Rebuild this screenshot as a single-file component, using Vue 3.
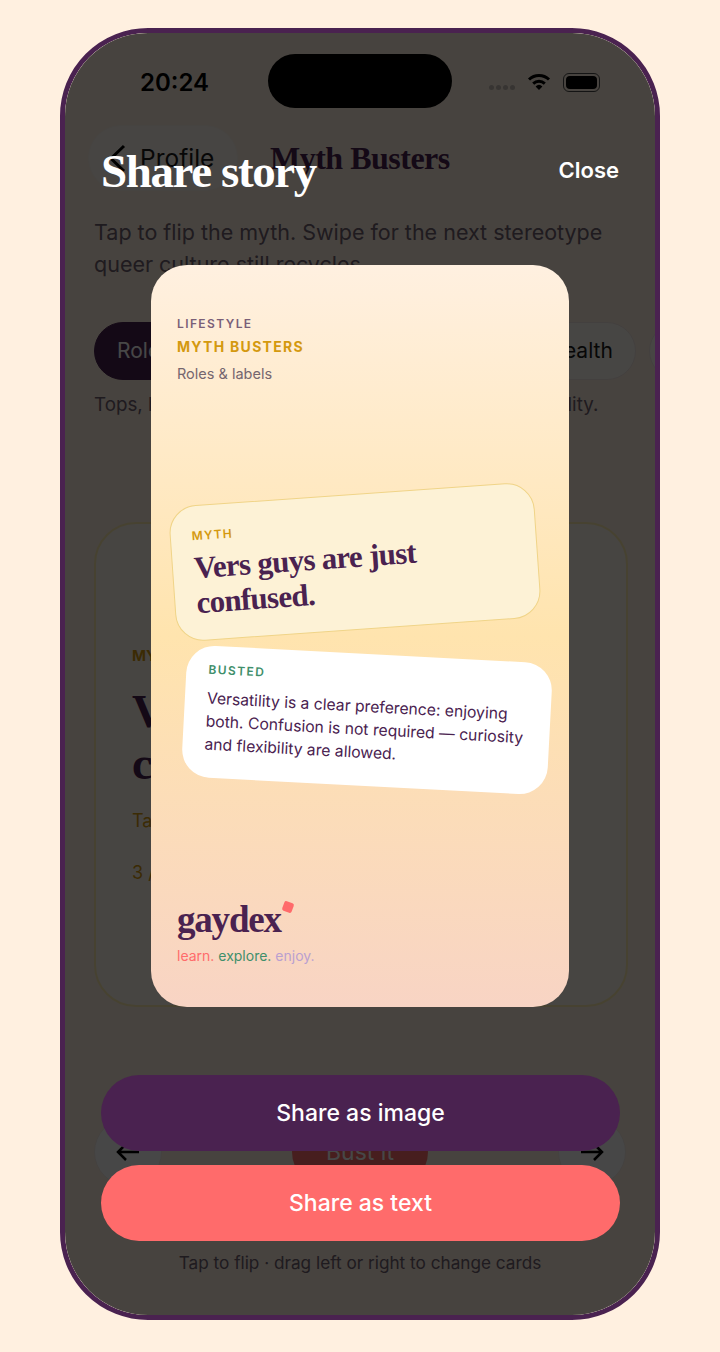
<template>
  <div class="phone">
    <div class="screen">
      <div class="status">
        <span class="time">20:24</span>
        <div class="island"></div>
        <div class="status-icons">
          <div class="signal"><i v-for="n in 4" :key="n"></i></div>
          <svg width="24" height="18" viewBox="0 0 24 18">
            <path d="M2 6.5a14.5 14.5 0 0 1 20 0" fill="none" stroke="#000" stroke-width="3" />
            <path d="M6.2 10.6a8.6 8.6 0 0 1 11.6 0" fill="none" stroke="#000" stroke-width="3" />
            <path d="M8.6 13.4a5 5 0 0 1 6.8 0L12 17z" fill="#000" />
          </svg>
          <div class="battery"><div class="battery-fill"></div></div>
        </div>
      </div>

      <div class="nav">
        <div class="back">
          <svg width="20" height="28" viewBox="0 0 20 28">
            <path d="M17 2 4 14.5 17 27" fill="none" stroke="#000" stroke-width="3" />
          </svg>
          <span>Profile</span>
        </div>
        <h1 class="page-title">Myth Busters</h1>
      </div>

      <p class="intro">Tap to flip the myth. Swipe for the next stereotype queer culture still recycles.</p>

      <div class="chips">
        <span v-for="chip in chips" :key="chip.label" class="chip" :class="{ active: chip.active }">{{ chip.label }}</span>
      </div>
      <p class="chip-note">Tops, bottoms and what people assume about versatility.</p>

      <div class="flip-card">
        <span class="flip-label">MYTH</span>
        <h2 class="flip-title">Vers guys are just confused.</h2>
        <span class="flip-hint">Tap to bust it</span>
        <span class="flip-count">3 / 12</span>
      </div>

      <div class="controls">
        <div class="round">
          <svg width="26" height="20" viewBox="0 0 26 20"><path d="M24 10H3M11 2l-8 8 8 8" fill="none" stroke="#000" stroke-width="2.5" /></svg>
        </div>
        <div class="bust">Bust it</div>
        <div class="round">
          <svg width="26" height="20" viewBox="0 0 26 20"><path d="M2 10h21M15 2l8 8-8 8" fill="none" stroke="#000" stroke-width="2.5" /></svg>
        </div>
      </div>
      <p class="caption">Tap to flip · drag left or right to change cards</p>

      <div class="overlay">
        <div class="overlay-head">
          <h2 class="share-title">Share story</h2>
          <span class="close">Close</span>
        </div>

        <div class="story">
          <div class="story-top">
            <div class="story-section">LIFESTYLE</div>
            <div class="story-name">MYTH BUSTERS</div>
            <div class="story-topic">Roles &amp; labels</div>
          </div>

          <div class="story-cards">
            <div class="myth">
              <div class="myth-label">MYTH</div>
              <div class="myth-text">Vers guys are just confused.</div>
            </div>
            <div class="busted">
              <div class="busted-label">BUSTED</div>
              <div class="busted-text">Versatility is a clear preference: enjoying both. Confusion is not required — curiosity and flexibility are allowed.</div>
            </div>
          </div>

          <div class="brand">
            <div class="logo">gaydex<i class="logo-dot"></i></div>
            <div class="tagline">
              <span class="learn">learn.</span> <span class="explore">explore.</span> <span class="enjoy">enjoy.</span>
            </div>
          </div>
        </div>

        <div class="actions">
          <button class="action image">Share as image</button>
          <button class="action text">Share as text</button>
        </div>
      </div>
    </div>
  </div>
</template>

<script setup>
const chips = [
  { label: "Roles & labels", active: true },
  { label: "Community" },
  { label: "Sex & health" },
  { label: "Dating" },
];
</script>

<style>
body {
  background: #fff0e0;
}
</style>

<style scoped>
.phone {
  box-sizing: border-box;
  width: 600px;
  height: 1292px;
  margin: 28px 60px 32px;
  border: 5px solid #4a2250;
  border-radius: 88px;
  overflow: hidden;
  font-family: "Inter", "Liberation Sans", sans-serif;
}

.screen {
  position: relative;
  box-sizing: border-box;
  height: 100%;
  padding: 0 29px;
  background: #fff0e0;
  color: #6f6070;
}

.status {
  display: flex;
  align-items: center;
  justify-content: space-between;
  height: 90px;
  padding: 0 26px 0 46px;
}

.time {
  font-size: 24px;
  font-weight: 600;
  color: #000;
  margin-top: 8px;
}

.island {
  position: absolute;
  top: 21px;
  left: 203px;
  width: 184px;
  height: 54px;
  border-radius: 27px;
  background: #000;
}

.status-icons {
  display: flex;
  align-items: center;
  gap: 12px;
  margin-top: 8px;
}

.signal {
  display: flex;
  gap: 2px;
  margin-top: 10px;
}

.signal i {
  width: 5px;
  height: 5px;
  border-radius: 50%;
  background: #c4bcb4;
}

.battery {
  box-sizing: border-box;
  width: 37px;
  height: 19px;
  padding: 2px;
  border: 1.5px solid #4a4a4a;
  border-radius: 6px;
}

.battery-fill {
  height: 100%;
  border-radius: 4px;
  background: #000;
}

.nav {
  display: flex;
  align-items: center;
  gap: 32px;
  height: 66px;
  margin-left: -6px;
  margin-top: 2px;
}

.back {
  display: flex;
  align-items: center;
  gap: 13px;
  width: 150px;
  height: 66px;
  box-sizing: border-box;
  padding-left: 18px;
  border: 1px solid #fbf2ea;
  border-radius: 33px;
  background: #fff8f0;
  color: #1a1a1a;
  font-size: 24.5px;
}

.page-title {
  margin: 0;
  font-family: "Liberation Serif", serif;
  font-size: 32px;
  font-weight: 700;
  letter-spacing: -0.5px;
  color: #4a2250;
}

.intro {
  margin: 25px 0 0;
  font-size: 21.5px;
  line-height: 32px;
}

.chips {
  display: flex;
  gap: 13px;
  margin-top: 42px;
  overflow: hidden;
  margin-right: -29px;
}

.chip {
  flex: none;
  box-sizing: border-box;
  padding: 0 22px;
  height: 58px;
  line-height: 56px;
  border: 1px solid #f0e6e0;
  border-radius: 29px;
  background: #fffaf4;
  font-size: 21px;
  color: #1a1a1a;
}

.chip.active {
  padding-right: 25px;
  border-color: #4a2250;
  background: #4a2250;
  color: #fff;
}

.chip-note {
  margin: 12px 0 0;
  font-size: 18.8px;
  line-height: 26px;
  white-space: nowrap;
}

.flip-card {
  display: flex;
  flex-direction: column;
  box-sizing: border-box;
  height: 485px;
  margin-top: 104px;
  margin-right: -2px;
  padding: 122px 36px 0;
  border: 2px solid #ffeeb0;
  border-radius: 42px;
  background: #fff6ec;
}

.flip-label {
  font-size: 15px;
  font-weight: 700;
  color: #d4990f;
}

.flip-title {
  margin: 21px 0 0;
  font-family: "Liberation Serif", serif;
  font-size: 46px;
  line-height: 52px;
  color: #4a2250;
}

.flip-hint {
  margin-top: 20px;
  font-size: 18px;
  color: #d4990f;
}

.flip-count {
  margin-top: 31px;
  font-size: 18px;
  color: #d4990f;
}

.controls {
  display: flex;
  align-items: center;
  justify-content: space-between;
  margin-top: 111px;
}

.round {
  display: flex;
  align-items: center;
  justify-content: center;
  box-sizing: border-box;
  width: 68px;
  height: 68px;
  border: 1px solid #f4ece6;
  border-radius: 50%;
  background: #fff;
}

.bust {
  width: 136px;
  height: 68px;
  line-height: 68px;
  text-align: center;
  border-radius: 34px;
  background: #ff6b6b;
  color: #fff;
  font-size: 23px;
}

.caption {
  margin: 66px 0 0;
  text-align: center;
  font-size: 17.2px;
}

.overlay {
  position: absolute;
  inset: 0;
  display: flex;
  flex-direction: column;
  align-items: center;
  box-sizing: border-box;
  padding: 0 36px;
  background: rgba(0, 0, 0, 0.72);
}

.overlay-head {
  display: flex;
  align-items: center;
  justify-content: space-between;
  box-sizing: border-box;
  width: 100%;
  height: 64px;
  margin-top: 106px;
  margin-bottom: 62px;
}

.share-title {
  margin: 0;
  font-family: "Liberation Serif", serif;
  font-size: 47px;
  font-weight: 700;
  letter-spacing: -1.4px;
  color: #fff;
}

.close {
  margin-top: -2px;
  font-size: 22px;
  font-weight: 600;
  color: #fff;
}

.story {
  display: flex;
  flex-direction: column;
  flex: none;
  box-sizing: border-box;
  width: 418px;
  height: 742px;
  padding: 52px 26px 42px;
  border-radius: 36px;
  background: linear-gradient(180deg, #fff0e0 0%, #ffe4ae 50%, #f8d4c4 100%);
}

.story-section {
  font-size: 12px;
  font-weight: 600;
  letter-spacing: 1.4px;
  line-height: 14px;
  color: #7a5f78;
}

.story-name {
  margin-top: 7px;
  font-size: 14px;
  font-weight: 700;
  letter-spacing: 1.3px;
  line-height: 18px;
  color: #d4990f;
}

.story-topic {
  margin-top: 9px;
  font-size: 14.5px;
  line-height: 18px;
  color: #75666f;
}

.story-cards {
  flex: 1;
  display: flex;
  flex-direction: column;
  justify-content: center;
  gap: 24px;
  padding-bottom: 4px;
}

.myth {
  box-sizing: border-box;
  width: 366px;
  margin-left: -5px;
  padding: 22px 21px 20px;
  border: 1px solid #f0d488;
  border-radius: 28px;
  background: #fdf2d6;
  transform: rotate(-4deg);
}

.myth-label {
  font-size: 12px;
  font-weight: 600;
  letter-spacing: 1.1px;
  color: #d4990f;
}

.myth-text {
  width: 240px;
  margin-top: 7px;
  font-family: "Liberation Serif", serif;
  font-size: 31px;
  font-weight: 700;
  letter-spacing: -0.7px;
  line-height: 35px;
  color: #4a2250;
}

.busted {
  box-sizing: border-box;
  width: 366px;
  margin-left: 7px;
  padding: 16px 22px 22px;
  border-radius: 28px;
  background: #fff;
  transform: rotate(3deg);
}

.busted-label {
  font-size: 12px;
  font-weight: 600;
  letter-spacing: 1.4px;
  color: #3f8f6b;
}

.busted-text {
  margin-top: 10px;
  font-size: 15.7px;
  line-height: 23px;
  color: #4a2250;
}

.logo {
  position: relative;
  width: fit-content;
  font-family: "Liberation Serif", serif;
  font-size: 37px;
  font-weight: 700;
  letter-spacing: -1.2px;
  line-height: 40px;
  color: #4a2250;
}

.logo-dot {
  position: absolute;
  top: 2px;
  right: -12px;
  width: 10px;
  height: 10px;
  border-radius: 2px;
  background: #ff6b6b;
  transform: rotate(20deg);
}

.tagline {
  margin-top: 7px;
  font-size: 14px;
  line-height: 18px;
}

.learn {
  color: #ff6b6b;
}

.explore {
  color: #3f8f6b;
}

.enjoy {
  color: #b9a0d0;
}

.actions {
  display: flex;
  flex-direction: column;
  gap: 14px;
  width: 519px;
  margin-top: 68px;
  align-self: flex-start;
}

.action {
  height: 76px;
  border: none;
  border-radius: 38px;
  color: #fff;
  font-family: inherit;
  font-size: 23px;
  font-weight: 500;
}

.action.image {
  background: #4a2250;
}

.action.text {
  background: #ff6b6b;
}
</style>
